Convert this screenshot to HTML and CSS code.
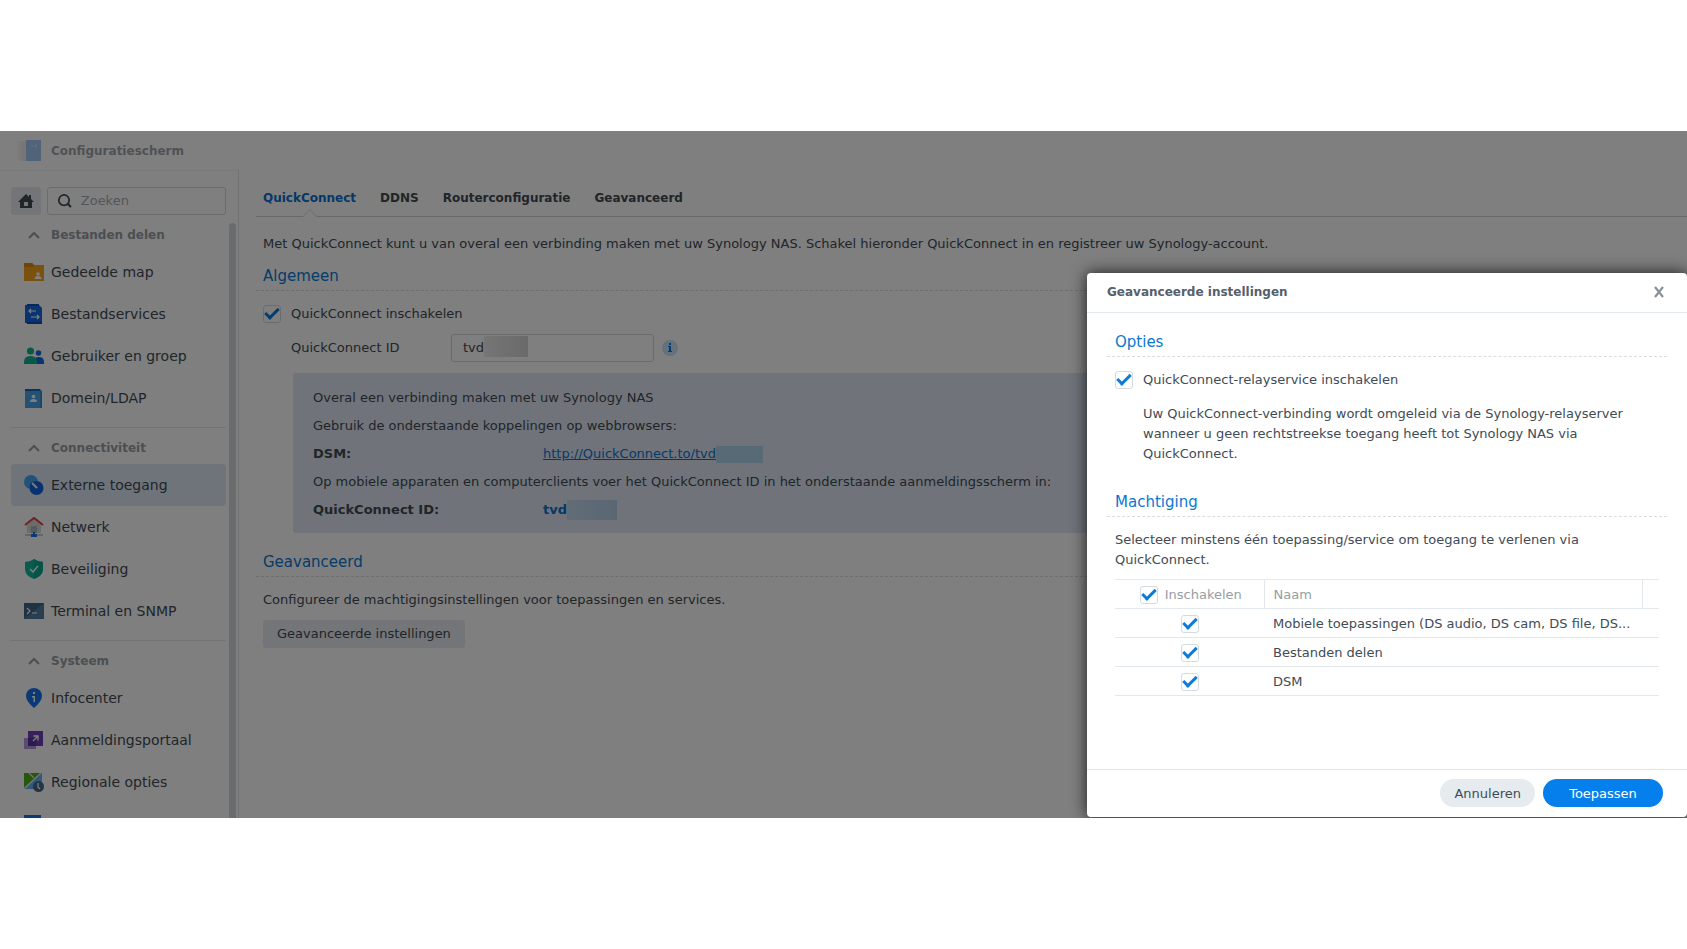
FILE: index.html
```html
<!DOCTYPE html>
<html lang="nl">
<head>
  <meta charset="UTF-8" />
  <meta name="viewport" content="width=device-width, initial-scale=1.0" />
  <title>Configuratiescherm</title>
  <link rel="stylesheet" href="styles.css">
</head>
<body>
  <div class="window">
    <header class="titlebar">
      <svg class="titlebar-icon" viewBox="0 0 24 24" aria-hidden="true">
        <path d="M2 2h6v20H0V5z" fill="#dfd8d8"/>
        <path d="M2 2h2v20H0V5z" fill="#f0e8e8"/>
        <rect x="8" y="1" width="15" height="21" fill="#4a90e2"/>
        <path d="M13 7h3M18 5v4" stroke="#9cc4f2" stroke-width="1"/>
      </svg>
      <h1>Configuratiescherm</h1>
    </header>

    <div class="columns">
      <aside class="sidebar">
        <div class="sidebar-tools">
          <button class="home-btn" aria-label="Start">
            <svg viewBox="0 0 16 16" width="16" height="16"><path d="M8 1L0 9h2v6h12V9h2l-3-3V2h-2v2zM6 9h4v4H6z" fill="#414b55" fill-rule="evenodd"/></svg>
          </button>
          <label class="search">
            <svg viewBox="0 0 16 16" width="16" height="16" aria-hidden="true"><circle cx="7" cy="7" r="6" fill="none" stroke="#414b55" stroke-width="2"/><path d="M11 11l4 4" stroke="#414b55" stroke-width="2.500"/></svg>
            <input type="text" placeholder="Zoeken" aria-label="Zoeken">
          </label>
        </div>

        <nav class="sidebar-nav">
          <section class="group">
            <h2><svg class="chevron" viewBox="0 0 12 8"><path d="M1 7l5-5 5 5"/></svg>Bestanden delen</h2>
            <a href="#">
              <svg viewBox="0 0 20 20"><path d="M0 1h8l2 2h10v16H0z" fill="#f5a31c"/><path d="M0 1h8l2 2v2H0z" fill="#e08a10"/><circle cx="14" cy="12" r="1.8" fill="#fff"/><path d="M10.500 17q0-3 3.500-3t3.500 3z" fill="#fff"/></svg>
              Gedeelde map
            </a>
            <a href="#">
              <svg viewBox="0 0 20 20"><path d="M1 1h14l3 3v15H1z" fill="#1569e0"/><path d="M3 0h12v2H3zM3 18h15v2H3z" fill="#0f4fb8"/><path d="M5 7h7M7 5L5 7l2 2M7 13h8M13 11l2 2-2 2" fill="none" stroke="#fff" stroke-width="1.200"/></svg>
              Bestandservices
            </a>
            <a href="#">
              <svg viewBox="0 0 20 20"><circle cx="14.500" cy="7" r="2.800" fill="#1569e0"/><path d="M10 18v-2q0-5 5-5t5 5v2z" fill="#1569e0"/><circle cx="6.500" cy="5" r="3.600" fill="#12b293"/><path d="M0 18v-2q0-6 6.500-6t6.500 6v2z" fill="#12b293"/></svg>
              Gebruiker en groep
            </a>
            <a href="#">
              <svg viewBox="0 0 20 20"><path d="M1 1h15l2 2v17H1z" fill="#4aa5e8"/><path d="M1 1h15v2H1z" fill="#1867b8"/><path d="M16 3h2v17h-2z" fill="#318fd9"/><circle cx="9.500" cy="8.500" r="1.800" fill="#fff"/><path d="M6 14q0-3 3.500-3t3.500 3z" fill="#fff"/></svg>
              Domein/LDAP
            </a>
          </section>

          <section class="group">
            <h2><svg class="chevron" viewBox="0 0 12 8"><path d="M1 7l5-5 5 5"/></svg>Connectiviteit</h2>
            <a href="#" class="active" aria-current="page">
              <svg viewBox="0 0 20 20"><circle cx="7" cy="7" r="7" fill="#45a4f0"/><circle cx="12.500" cy="13" r="7" fill="#1262e3"/><path d="M7 8l4 3" stroke="#1262e3" stroke-width="4"/><path d="M8 8l5 5" stroke="#fff" stroke-width="1.800"/></svg>
              Externe toegang
            </a>
            <a href="#">
              <svg viewBox="0 0 20 20"><path d="M3 8l7-6 7 6v8H3z" fill="#d8d8d8"/><path d="M7 9h6v7H7z" fill="#aeb7bd"/><path d="M1 8l9-7 9 7" fill="none" stroke="#e2493f" stroke-width="2.200"/><path d="M1 18h18" stroke="#b4bfc8" stroke-width="1.500"/><path d="M7 17h6v3H7zM9 15h2v3H9z" fill="#1673ea"/></svg>
              Netwerk
            </a>
            <a href="#">
              <svg viewBox="0 0 20 20"><path d="M10 0q4 3 9 3v7q0 7-9 10Q1 17 1 10V3q5 0 9-3z" fill="#0fb89a"/><path d="M10 0q4 3 9 3v7q0 7-9 10z" fill="#0aa98e"/><path d="M6 10l3 3 5-6" fill="none" stroke="#fff" stroke-width="1.500"/></svg>
              Beveiliging
            </a>
            <a href="#">
              <svg viewBox="0 0 20 20"><path d="M0 2h20v16H0z" fill="#3f678b"/><path d="M20 2v16H0z" fill="#527c9f"/><path d="M3 7l3 3-3 3M8 12h5" fill="none" stroke="#fff" stroke-width="1.200"/></svg>
              Terminal en SNMP
            </a>
          </section>

          <section class="group">
            <h2><svg class="chevron" viewBox="0 0 12 8"><path d="M1 7l5-5 5 5"/></svg>Systeem</h2>
            <a href="#">
              <svg viewBox="0 0 20 20"><path d="M10 0a8 8 0 0 1 8 8q0 5-8 12Q2 13 2 8a8 8 0 0 1 8-8z" fill="#1673ea"/><path d="M9 4h2v2H9zM8 8h3v6H9.500V9.500H8z" fill="#fff"/></svg>
              Infocenter
            </a>
            <a href="#">
              <svg viewBox="0 0 20 20"><path d="M0 8h12v11H0z" fill="#b497e0"/><path d="M4 1h15v15H4z" fill="#7040b8"/><path d="M4 8h8v8H4z" fill="#5b30a0"/><path d="M9 11l5-5M9.500 6H14v4.500" fill="none" stroke="#fff" stroke-width="1.300"/></svg>
              Aanmeldingsportaal
            </a>
            <a href="#">
              <svg viewBox="0 0 20 20"><path d="M0 1h18v16H0z" fill="#5cb3f0"/><path d="M0 1h16L0 15z" fill="#4caf1c"/><path d="M5 1l5 5M17 1L0 17" stroke="#e9ecc8" stroke-width="1.300"/><circle cx="14.500" cy="14.500" r="5.500" fill="#49698c"/><path d="M14 11v4l2 2" fill="none" stroke="#fff" stroke-width="1.200"/></svg>
              Regionale opties
            </a>
            <a href="#" aria-label="Meldingen">
              <svg viewBox="0 0 20 20"><path d="M0 1h17v17H0z" fill="#1673ea"/></svg>
            </a>
          </section>
        </nav>
        <div class="scrollbar"></div>
      </aside>

      <main class="content">
        <nav class="tabs">
          <a href="#" class="active" aria-current="page">QuickConnect</a>
          <a href="#">DDNS</a>
          <a href="#">Routerconfiguratie</a>
          <a href="#">Geavanceerd</a>
        </nav>

        <p class="intro">Met QuickConnect kunt u van overal een verbinding maken met uw Synology NAS. Schakel hieronder QuickConnect in en registreer uw Synology-account.</p>

        <h3 class="section-title">Algemeen</h3>
        <label class="check-row">
          <input type="checkbox" checked>
          QuickConnect inschakelen
        </label>
        <div class="field">
          <label for="qcId">QuickConnect ID</label>
          <div class="field-input">
            <input type="text" id="qcId" value="tvd">
            <span class="field-mask"></span>
          </div>
          <svg class="info" viewBox="0 0 16 16" role="img" aria-label="Info"><circle cx="8" cy="8" r="8" fill="#c9e4fb"/><path d="M7 3h2v2H7zM6 6h3v5h1v1H6v-1h1V7H6z" fill="#0675d6"/></svg>
        </div>

        <div class="info-box">
          <p>Overal een verbinding maken met uw Synology NAS</p>
          <p>Gebruik de onderstaande koppelingen op webbrowsers:</p>
          <div class="info-row">
            <strong>DSM:</strong>
            <a href="#">http://QuickConnect.to/tvd</a><span class="mask-link"></span>
          </div>
          <p>Op mobiele apparaten en computerclients voer het QuickConnect ID in het onderstaande aanmeldingsscherm in:</p>
          <div class="info-row">
            <strong>QuickConnect ID:</strong>
            <b>tvd</b><span class="mask-id"></span>
          </div>
        </div>

        <h3 class="section-title">Geavanceerd</h3>
        <p class="advanced-text">Configureer de machtigingsinstellingen voor toepassingen en services.</p>
        <button class="btn-flat">Geavanceerde instellingen</button>
      </main>
    </div>

    <div class="overlay"></div>

    <div class="dialog" role="dialog" aria-labelledby="dialogTitle">
      <header class="dialog-header">
        <h2 id="dialogTitle">Geavanceerde instellingen</h2>
        <button class="close" aria-label="Sluiten">
          <svg viewBox="0 0 12 12" width="12" height="12"><path d="M2 1l8 10M10 1L2 11" stroke="#8a9299" stroke-width="2.200"/></svg>
        </button>
      </header>

      <div class="dialog-body">
        <h3 class="section-title">Opties</h3>
        <label class="check-row">
          <input type="checkbox" checked>
          QuickConnect-relayservice inschakelen
        </label>
        <p class="hint">Uw QuickConnect-verbinding wordt omgeleid via de Synology-relayserver wanneer u geen rechtstreekse toegang heeft tot Synology NAS via QuickConnect.</p>

        <h3 class="section-title">Machtiging</h3>
        <p class="permission-text">Selecteer minstens één toepassing/service om toegang te verlenen via QuickConnect.</p>
        <table>
          <colgroup><col class="col-enable"><col><col class="col-end"></colgroup>
          <thead>
            <tr>
              <th><label><input type="checkbox" checked>Inschakelen</label></th>
              <th>Naam</th>
              <th></th>
            </tr>
          </thead>
          <tbody>
            <tr>
              <td><input type="checkbox" aria-label="Mobiele toepassingen" checked></td>
              <td colspan="2">Mobiele toepassingen (DS audio, DS cam, DS file, DS...</td>
            </tr>
            <tr>
              <td><input type="checkbox" aria-label="Bestanden delen" checked></td>
              <td colspan="2">Bestanden delen</td>
            </tr>
            <tr>
              <td><input type="checkbox" aria-label="DSM" checked></td>
              <td colspan="2">DSM</td>
            </tr>
          </tbody>
        </table>
      </div>

      <footer class="dialog-footer">
        <button class="btn">Annuleren</button>
        <button class="btn btn-primary">Toepassen</button>
      </footer>
    </div>
  </div>
</body>
</html>
```
FILE: styles.css
```css
:root {
  --blue: #057feb;
  --title-blue: #0a78d1;
  --text: #414b55;
  --muted: #969ea5;
  --line: #e3e8ec;
  --soft-bg: #e6ebf0;
  --select-bg: #dfe9f5;
}

*,
*::before,
*::after {
  box-sizing: border-box;
}

body {
  margin: 0;
  padding: 131px 0;
  background: #fff;
  color: var(--text);
  font: 13px/20px "DejaVu Sans", Verdana, sans-serif;
}

h1, h2, h3, p {
  margin: 0;
}

a {
  color: inherit;
  text-decoration: none;
}

button, input {
  font: inherit;
  color: inherit;
}

button {
  border: none;
  cursor: pointer;
}

.window {
  position: relative;
  display: flex;
  flex-direction: column;
  height: calc(100vh - 262px);
  min-height: 560px;
  overflow: hidden;
  background: #fff;
}

/* title bar */
.titlebar {
  display: flex;
  align-items: center;
  gap: 9px;
  height: 39px;
  padding-left: 18px;
  opacity: 0.5;
}

.titlebar-icon {
  width: 24px;
  height: 24px;
}

.titlebar h1 {
  font-size: 12px;
}

.columns {
  display: flex;
  flex: 1;
  min-height: 0;
}

/* sidebar */
.sidebar {
  position: relative;
  flex: 0 0 239px;
  display: flex;
  flex-direction: column;
  padding: 16px 12px 0 11px;
  border-top: 1px solid #f0f2f4;
  border-right: 1px solid #dfe2e5;
}

.sidebar-tools {
  display: flex;
  gap: 6px;
}

.home-btn {
  display: flex;
  align-items: center;
  justify-content: center;
  width: 30px;
  height: 28px;
  padding: 0;
  border-radius: 3px;
  background: var(--soft-bg);
}

.search {
  display: flex;
  flex: 1;
  align-items: center;
  gap: 8px;
  height: 28px;
  padding: 0 10px;
  border: 1px solid #d0d8df;
  border-radius: 3px;
}

.search input {
  width: 100%;
  min-width: 0;
  padding: 0 0 0 1px;
  border: none;
  outline: none;
  background: none;
}

.search input::placeholder {
  color: #a5adb4;
}

.sidebar-nav {
  flex: 1;
  min-height: 0;
  overflow: hidden;
}

.group {
  padding-bottom: 8px;
}

.group + .group {
  border-top: 1px solid var(--line);
}

.group h2 {
  display: flex;
  align-items: center;
  gap: 11px;
  height: 36px;
  padding: 4px 0 0 17px;
  color: var(--muted);
  font-size: 12px;
}

.chevron {
  width: 12px;
  height: 8px;
  fill: none;
  stroke: var(--muted);
  stroke-width: 2;
}

.group a {
  display: flex;
  align-items: center;
  gap: 7px;
  height: 42px;
  padding-left: 13px;
  border-radius: 4px;
  font-size: 14px;
}

.group a svg {
  flex: none;
  width: 20px;
  height: 20px;
}

.group a.active {
  background: var(--select-bg);
}

.scrollbar {
  position: absolute;
  top: 52px;
  right: 2px;
  bottom: -8px;
  width: 7px;
  border-radius: 4px;
  background: #d4d7da;
}

/* content */
.content {
  flex: 1;
  min-width: 0;
  padding: 18px 0 0 17px;
}

.tabs {
  display: flex;
  gap: 24px;
  height: 29px;
  padding-left: 7px;
  border-bottom: 1px solid #cfd4d8;
  font-size: 12px;
  font-weight: bold;
}

.tabs a {
  position: relative;
}

.tabs .active {
  color: #0671d3;
}

.tabs .active::after {
  content: "";
  position: absolute;
  left: 50%;
  bottom: -5px;
  width: 10px;
  height: 10px;
  border: 1px solid #e3e6e9;
  border-width: 1px 0 0 1px;
  background: #fff;
  transform: translateX(-50%) rotate(45deg);
}

.intro {
  padding: 17px 7px 0;
}

.section-title {
  height: 28px;
  padding: 3px 8px 0;
  border-bottom: 1px dashed #d8dee3;
  color: var(--title-blue);
  font-size: 15px;
  font-weight: normal;
}

.content .section-title {
  margin-top: 9px;
  padding-left: 7px;
}

.check-row {
  display: flex;
  align-items: center;
  gap: 10px;
  padding-left: 8px;
}

.content .check-row {
  height: 41px;
  margin-top: 2px;
  padding-left: 7px;
}

input[type="checkbox"] {
  appearance: none;
  position: relative;
  flex: none;
  width: 18px;
  height: 18px;
  margin: 0;
  border: 1px solid #d4dbe1;
  border-radius: 3px;
  background: #fff;
}

input[type="checkbox"]:checked::before {
  content: "";
  position: absolute;
  left: 1px;
  top: 2px;
  width: 14px;
  height: 8px;
  border: solid #0b7bdc;
  border-width: 0 0 3px 3px;
  transform: rotate(-45deg);
}

.field {
  display: flex;
  align-items: center;
  padding-left: 35px;
}

.field label {
  width: 160px;
}

.field-input {
  position: relative;
  width: 203px;
}

.field-input input {
  display: block;
  width: 100%;
  height: 28px;
  padding: 0 11px 2px;
  border: 1px solid #d0d8df;
  border-radius: 3px;
}

.field-mask {
  position: absolute;
  left: 33px;
  top: 2px;
  width: 44px;
  height: 21px;
  background: linear-gradient(90deg, #ececec, #d4d4d6);
}

.info {
  width: 16px;
  height: 16px;
  margin-left: 8px;
}

.info-box {
  margin: 11px 18px 0 37px;
  padding: 11px 20px 9px;
  border-radius: 3px;
  background: #e0e9f4;
  line-height: 28px;
}

.info-row {
  display: flex;
  align-items: center;
}

.info-row strong {
  width: 230px;
}

.info-row a {
  color: #0675d6;
  text-decoration: underline;
}

.info-row b {
  color: #0671d3;
}

.mask-link {
  width: 47px;
  height: 17px;
  background: #b3d4ee;
}

.mask-id {
  width: 50px;
  height: 20px;
  background: linear-gradient(90deg, #c4d9ed, #b3cfe9);
}

.content .info-box + .section-title {
  margin-top: 16px;
}

.advanced-text {
  padding: 13px 7px 10px;
}

.btn-flat {
  height: 28px;
  margin-left: 7px;
  padding: 0 14px;
  border-radius: 3px;
  background: var(--soft-bg);
}

.overlay {
  position: absolute;
  inset: 0;
  background: rgba(0, 0, 0, 0.5);
}

/* dialog */
.dialog {
  position: absolute;
  right: 0;
  bottom: 1px;
  width: 600px;
  max-width: 100%;
  border-radius: 4px;
  background: #fff;
  box-shadow: 0 0 16px rgba(0, 0, 0, 0.8);
}

.dialog-header {
  display: flex;
  align-items: center;
  justify-content: space-between;
  height: 40px;
  padding: 0 18px 2px 20px;
  border-bottom: 1px solid var(--line);
}

.dialog-header h2 {
  color: #56606a;
  font-size: 12px;
}

.close {
  display: flex;
  padding: 4px;
  background: none;
}

.dialog-body {
  padding: 16px 20px 73px;
}

.dialog-body .check-row {
  height: 46px;
}

.hint {
  padding: 1px 36px 25px;
}

.permission-text {
  padding: 13px 40px 9px 8px;
}

table {
  width: 544px;
  margin-left: 8px;
  border-collapse: collapse;
  table-layout: fixed;
  border-top: 1px solid var(--line);
}

.col-enable {
  width: 149px;
}

.col-end {
  width: 17px;
}

th, td {
  height: 29px;
  padding: 1px 9px 0;
  border-bottom: 1px solid var(--line);
  text-align: left;
  white-space: nowrap;
}

th {
  color: var(--muted);
  font-weight: normal;
}

th + th {
  border-left: 1px solid var(--line);
}

th label {
  display: flex;
  align-items: center;
  justify-content: center;
  gap: 7px;
}

th:first-child {
  padding-left: 12px;
}

td:first-child input {
  display: block;
  margin: 0 auto;
}

.dialog-footer {
  display: flex;
  justify-content: flex-end;
  gap: 8px;
  padding: 9px 24px 10px;
  border-top: 1px solid var(--line);
}

.btn {
  height: 28px;
  padding: 1px 14px 0;
  border-radius: 14px;
  background: var(--soft-bg);
}

.btn-primary {
  min-width: 120px;
  background: var(--blue);
  color: #fff;
}
```
